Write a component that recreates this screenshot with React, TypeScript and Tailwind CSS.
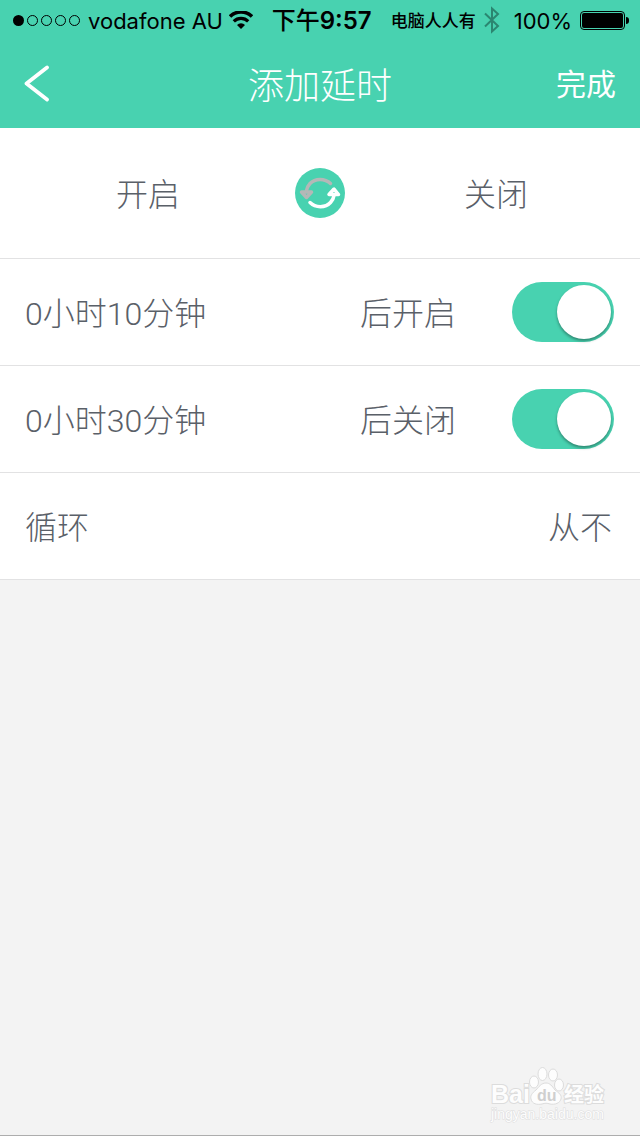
import { useState } from "react";

interface DelayRowProps {
  id: string;
  time: string;
  action: string;
  checked: boolean;
  onChange: (checked: boolean) => void;
}

function SignalDots() {
  return (
    <div className="flex gap-[3px]">
      <span className="size-[11px] rounded-full bg-black" />
      <span className="size-[11px] rounded-full border border-black" />
      <span className="size-[11px] rounded-full border border-black" />
      <span className="size-[11px] rounded-full border border-black" />
      <span className="size-[11px] rounded-full border border-black" />
    </div>
  );
}

function WifiIcon() {
  return (
    <svg viewBox="0 0 24 18" className="h-[18px] w-6" fill="none" stroke="#000">
      <path d="M1 5.500a15.800 15.800 0 0 1 22 0" strokeWidth="3.600" />
      <path d="M4.800 10.400a10.200 10.200 0 0 1 14.400 0" strokeWidth="3.200" />
      <path d="M8 14a5.600 5.600 0 0 1 8 0L12 18z" fill="#000" stroke="none" />
    </svg>
  );
}

function BluetoothIcon() {
  return (
    <svg
      viewBox="0 0 16 28"
      className="h-7 w-4"
      fill="none"
      stroke="#2b8670"
      strokeWidth="2"
    >
      <path d="M1 7.500 14 20 8 25.500V2.500L14 8 1 20.500" />
    </svg>
  );
}

function Battery() {
  return (
    <div className="flex items-center gap-px">
      <div className="h-[19px] w-[45px] rounded-[4px] border border-black p-px">
        <div className="h-full rounded-[2px] bg-black" />
      </div>
      <span className="h-[7px] w-[3px] rounded-r-full bg-black" />
    </div>
  );
}

function StatusBar() {
  return (
    <div className="flex h-10 items-center justify-between pr-[11px] pl-[13px] text-[22px] whitespace-nowrap text-black">
      <div className="flex items-center gap-1.5">
        <SignalDots />
        <span className="pt-0.5 pl-0.5">vodafone AU</span>
        <WifiIcon />
      </div>
      <span className="pt-0.5 text-2xl font-semibold">
        <span className="font-medium">下午</span>9:57
      </span>
      <div className="flex items-center">
        <span className="pt-1 text-[17px] font-medium">电脑人人有</span>
        <span className="ml-2">
          <BluetoothIcon />
        </span>
        <span className="ml-3.5 pt-0.5">100%</span>
        <span className="ml-2">
          <Battery />
        </span>
      </div>
    </div>
  );
}

function NavBar() {
  return (
    <div className="grid h-22 grid-cols-[1fr_auto_1fr] items-center px-6 text-white">
      <button type="button" aria-label="返回" className="justify-self-start">
        <svg
          viewBox="0 0 26 38"
          className="h-[38px] w-[26px]"
          fill="none"
          stroke="currentColor"
          strokeWidth="3.800"
          strokeLinecap="round"
          strokeLinejoin="round"
        >
          <path d="M23 2.500 2.500 18.500l20.500 16" />
        </svg>
      </button>
      <h1 className="pt-1 text-4xl font-light">添加延时</h1>
      <button type="button" className="justify-self-end text-[30px]">
        完成
      </button>
    </div>
  );
}

function SwapIcon() {
  return (
    <svg
      viewBox="0 0 50 50"
      className="size-[50px]"
      fill="none"
      strokeWidth="3.500"
      strokeLinecap="round"
      strokeLinejoin="round"
    >
      <circle cx="25" cy="25" r="25" fill="#48d2b0" />
      <g stroke="#b4b8b7">
        <path d="M35.500 15.500C30 10 20 10 15 15.500c-2 2.300-3.200 4.500-3.500 7" />
        <path d="M6.500 24h10l-5 5.500z" strokeWidth="3.500" />
      </g>
      <g stroke="#fff">
        <path d="M15 34.500c5.500 5.500 15.500 5.500 20.500 0 2-2.300 3.200-4.500 3.500-7" />
        <path d="M34 26.500h9.500L39 21z" strokeWidth="3.500" />
      </g>
    </svg>
  );
}

function DelayRow({ id, time, action, checked, onChange }: DelayRowProps) {
  return (
    <li className="flex h-[107px] items-center border-b border-[#e2e2e3] pr-[26px] pl-[25px]">
      <button
        type="button"
        className="flex-1 pt-[3px] text-left font-['Roboto','Noto_Sans_CJK_SC',sans-serif]"
      >
        {time}
      </button>
      <label htmlFor={id} className="mr-14 pt-[3px]">
        {action}
      </label>
      <input
        id={id}
        type="checkbox"
        checked={checked}
        onChange={(e) => onChange(e.target.checked)}
        className="flex h-[60px] w-[102px] appearance-none items-center rounded-full bg-gray-300 p-[3px] before:size-[54px] before:rounded-full before:bg-white before:shadow-[0_2px_3px_rgba(0,0,0,0.35)] checked:justify-end checked:bg-[#48d2b0]"
      />
    </li>
  );
}

function Watermark() {
  return (
    <svg
      viewBox="0 0 124 64"
      className="h-16 w-[124px] font-['Liberation_Sans','Noto_Sans_CJK_SC',sans-serif]"
      fill="#fdfdfd"
      stroke="#dcdcdc"
      strokeWidth="1"
    >
      <g strokeWidth="2" paintOrder="stroke" fontWeight="700">
        <text x="5" y="38" fontSize="25">
          Bai
        </text>
        <text x="78" y="37" fontSize="20">
          经验
        </text>
      </g>
      <ellipse cx="48" cy="17" rx="4.500" ry="6" />
      <ellipse cx="56.500" cy="9" rx="4.500" ry="6.500" />
      <ellipse cx="67" cy="10" rx="4.500" ry="6" />
      <ellipse cx="73" cy="20" rx="4.500" ry="6" />
      <path d="M60 18c-5 0-7 4-10 7-4 3-6 6-5 9 1 5 6 6 11 5 3-1 5-1 8 0 5 1 10-1 11-5 1-4-2-6-6-9-3-4-5-7-9-7z" />
      <text x="51" y="36" fontSize="16" fontWeight="700" fill="#cfcfcf" stroke="none">
        du
      </text>
      <text x="5" y="54" fontSize="14" paintOrder="stroke">
        jingyan.baidu.com
      </text>
    </svg>
  );
}

export default function App() {
  const [openOn, setOpenOn] = useState(true);
  const [closeOn, setCloseOn] = useState(true);

  return (
    <div className="flex min-h-screen flex-col border-b border-[#adadad] bg-[#f3f3f3] font-['Inter','Noto_Sans_CJK_SC',sans-serif]">
      <header className="bg-[#48d2b0]">
        <StatusBar />
        <NavBar />
      </header>
      <main className="bg-white text-[32px] font-light text-[#5a6068]">
        <div className="grid h-[131px] grid-cols-[1fr_auto_1fr] items-center border-b border-[#e2e2e3]">
          <span className="pt-[3px] pr-[115px] text-right">开启</span>
          <button type="button" aria-label="切换顺序">
            <SwapIcon />
          </button>
          <span className="pt-[3px] pl-[119px]">关闭</span>
        </div>
        <ul>
          <DelayRow
            id="delay-open"
            time="0小时10分钟"
            action="后开启"
            checked={openOn}
            onChange={setOpenOn}
          />
          <DelayRow
            id="delay-close"
            time="0小时30分钟"
            action="后关闭"
            checked={closeOn}
            onChange={setCloseOn}
          />
          <li className="border-b border-[#e2e2e3]">
            <button
              type="button"
              className="flex h-[106px] w-full items-center justify-between pt-[3px] pr-7 pl-[25px]"
            >
              <span>循环</span>
              <span>从不</span>
            </button>
          </li>
        </ul>
      </main>
      <footer className="mt-auto flex justify-end pr-[30px] pb-1.5">
        <Watermark />
      </footer>
    </div>
  );
}
